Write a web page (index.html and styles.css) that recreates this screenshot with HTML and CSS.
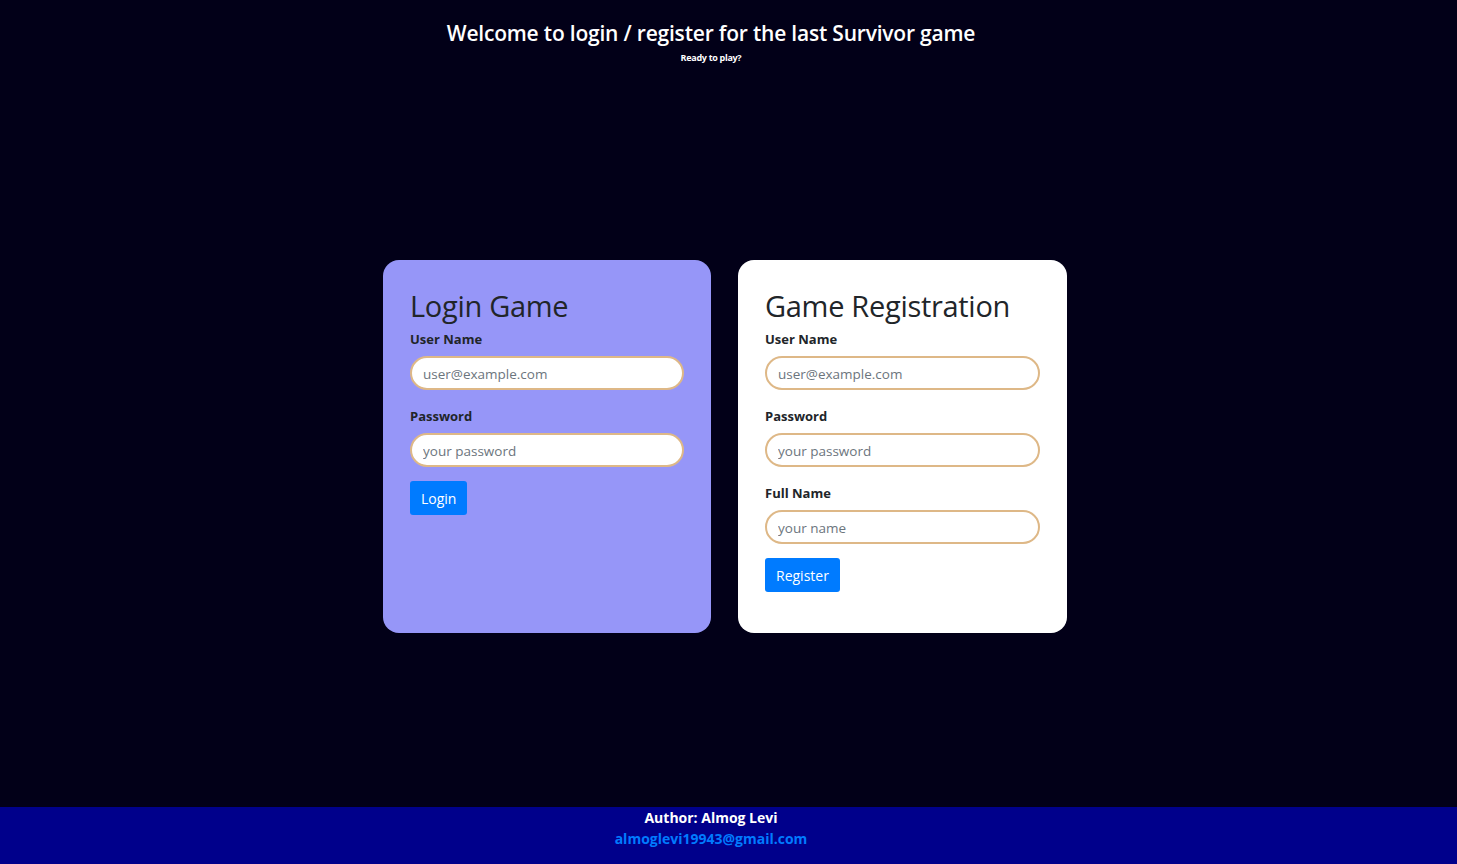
FILE: index.html
```html
<!DOCTYPE html>
<html lang="en">
<head>
<meta charset="utf-8">
<title>Last Survivor - Login</title>
<link rel="stylesheet" href="styles.css">
</head>
<body>
<div class="page">
  <header class="hero">
    <h1 class="hero-title">Welcome to login / register for the last Survivor game</h1>
    <p class="hero-sub">Ready to play?</p>
  </header>
  <main class="cards">
    <section class="card card-login">
      <h2 class="card-title">Login Game</h2>
      <label class="field-label">User Name</label>
      <input class="field-input" type="text" placeholder="user@example.com">
      <label class="field-label">Password</label>
      <input class="field-input" type="password" placeholder="your password">
      <button class="btn">Login</button>
    </section>
    <section class="card card-register">
      <h2 class="card-title">Game Registration</h2>
      <label class="field-label">User Name</label>
      <input class="field-input" type="text" placeholder="user@example.com">
      <label class="field-label">Password</label>
      <input class="field-input" type="password" placeholder="your password">
      <label class="field-label">Full Name</label>
      <input class="field-input" type="text" placeholder="your name">
      <button class="btn">Register</button>
    </section>
  </main>
  <footer class="footer">
    <div class="footer-author">Author: Almog Levi</div>
    <a class="footer-mail" href="#">almoglevi19943@gmail.com</a>
  </footer>
</div>
</body>
</html>
```
FILE: styles.css
```css
* { box-sizing: border-box; }
html, body { margin: 0; padding: 0; }
body {
  background: #020018;
  font-family: "Open Sans", "Noto Sans", sans-serif;
  color: #212529;
}
.page {
  height: 864px;
  display: flex;
  flex-direction: column;
}
.hero {
  text-align: center;
  padding-top: 18px;
  padding-right: 35px;
  color: #fff;
}
.hero-title {
  margin: 0;
  font-size: 21px;
  font-weight: 600;
  line-height: 30px;
  letter-spacing: -0.2px;
}
.hero-sub {
  margin: 4px 0 0;
  font-size: 9px;
  font-weight: 700;
  line-height: 12px;
  letter-spacing: -0.3px;
}
.cards {
  flex: 1;
  display: flex;
  justify-content: center;
  align-items: flex-start;
  gap: 27px;
  padding-top: 196px;
  padding-right: 7px;
}
.card {
  width: 328px;
  height: 373px;
  border-radius: 16px;
  padding: 27px 27px;
  display: flex;
  flex-direction: column;
  align-items: flex-start;
}
.card-register { width: 329px; }
.card-login { background: #9696f8; }
.card-register { background: #ffffff; }
.card-title {
  margin: 0 0 5px;
  font-size: 29px;
  font-weight: 400;
  line-height: 38px;
  letter-spacing: -0.3px;
  color: #212529;
}
.field-label {
  font-size: 13px;
  font-weight: 700;
  line-height: 18px;
  margin-bottom: 8px;
  color: #212529;
}
.field-input {
  width: 100%;
  height: 34px;
  border: 2px solid #deb887;
  border-radius: 17px;
  padding: 1px 11px 0;
  font-family: inherit;
  font-size: 13.5px;
  color: #495057;
  background: #fff;
  margin-bottom: 17px;
  outline: none;
}
.field-input::placeholder { color: #6c757d; }
.btn {
  margin-top: -3px;
  background: #007bff;
  color: #fff;
  border: none;
  border-radius: 3px;
  height: 34px;
  padding: 0 11px;
  font-family: inherit;
  font-size: 14px;
}
.footer {
  height: 57px;
  background: #00008b;
  text-align: center;
  font-weight: 700;
  font-size: 14px;
  padding-top: 0;
  padding-right: 35px;
  line-height: 21px;
}
.footer-author { color: #fff; }
.footer-mail { color: #007bff; text-decoration: none; }
```
